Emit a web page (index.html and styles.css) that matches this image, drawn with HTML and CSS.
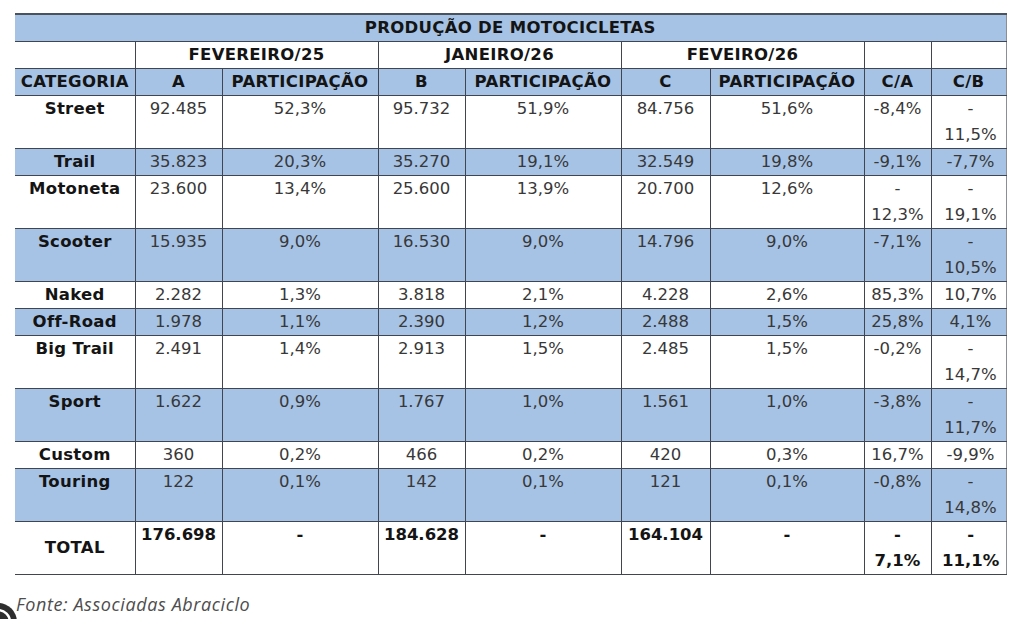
FILE: index.html
```html
<!DOCTYPE html>
<html lang="pt-BR">
<head>
<meta charset="utf-8">
<title>Produção de Motocicletas</title>
<link rel="stylesheet" href="styles.css">
</head>
<body>
<main class="page">
  <table class="prod">
    <colgroup>
      <col class="c-cat"><col class="c-num"><col class="c-part"><col class="c-num"><col class="c-part"><col class="c-num2"><col class="c-part2"><col class="c-ca"><col class="c-cb">
    </colgroup>
    <tr class="blue title"><th colspan="9">PRODUÇÃO DE MOTOCICLETAS</th></tr>
    <tr class="months">
      <th class="blank"></th>
      <th colspan="2">FEVEREIRO/25</th>
      <th colspan="2">JANEIRO/26</th>
      <th colspan="2">FEVEIRO/26</th>
      <th></th>
      <th></th>
    </tr>
    <tr class="blue head">
      <th>CATEGORIA</th><th>A</th><th>PARTICIPAÇÃO</th><th>B</th><th>PARTICIPAÇÃO</th><th>C</th><th>PARTICIPAÇÃO</th><th>C/A</th><th>C/B</th>
    </tr>
    <tr>
      <th class="cat">Street</th><td>92.485</td><td>52,3%</td><td>95.732</td><td>51,9%</td><td>84.756</td><td>51,6%</td><td>-8,4%</td><td class="cb">-<br>11,5%</td>
    </tr>
    <tr class="blue">
      <th class="cat">Trail</th><td>35.823</td><td>20,3%</td><td>35.270</td><td>19,1%</td><td>32.549</td><td>19,8%</td><td>-9,1%</td><td class="cb">-7,7%</td>
    </tr>
    <tr>
      <th class="cat">Motoneta</th><td>23.600</td><td>13,4%</td><td>25.600</td><td>13,9%</td><td>20.700</td><td>12,6%</td><td>-<br>12,3%</td><td class="cb">-<br>19,1%</td>
    </tr>
    <tr class="blue">
      <th class="cat">Scooter</th><td>15.935</td><td>9,0%</td><td>16.530</td><td>9,0%</td><td>14.796</td><td>9,0%</td><td>-7,1%</td><td class="cb">-<br>10,5%</td>
    </tr>
    <tr>
      <th class="cat">Naked</th><td>2.282</td><td>1,3%</td><td>3.818</td><td>2,1%</td><td>4.228</td><td>2,6%</td><td>85,3%</td><td class="cb">10,7%</td>
    </tr>
    <tr class="blue">
      <th class="cat">Off-Road</th><td>1.978</td><td>1,1%</td><td>2.390</td><td>1,2%</td><td>2.488</td><td>1,5%</td><td>25,8%</td><td class="cb">4,1%</td>
    </tr>
    <tr>
      <th class="cat">Big Trail</th><td>2.491</td><td>1,4%</td><td>2.913</td><td>1,5%</td><td>2.485</td><td>1,5%</td><td>-0,2%</td><td class="cb">-<br>14,7%</td>
    </tr>
    <tr class="blue">
      <th class="cat">Sport</th><td>1.622</td><td>0,9%</td><td>1.767</td><td>1,0%</td><td>1.561</td><td>1,0%</td><td>-3,8%</td><td class="cb">-<br>11,7%</td>
    </tr>
    <tr>
      <th class="cat">Custom</th><td>360</td><td>0,2%</td><td>466</td><td>0,2%</td><td>420</td><td>0,3%</td><td>16,7%</td><td class="cb">-9,9%</td>
    </tr>
    <tr class="blue">
      <th class="cat">Touring</th><td>122</td><td>0,1%</td><td>142</td><td>0,1%</td><td>121</td><td>0,1%</td><td>-0,8%</td><td class="cb">-<br>14,8%</td>
    </tr>
    <tr class="total">
      <th class="cat mid">TOTAL</th><td>176.698</td><td>-</td><td>184.628</td><td>-</td><td>164.104</td><td>-</td><td>-<br>7,1%</td><td class="cb">-<br>11,1%</td>
    </tr>
  </table>
  <p class="fonte">Fonte: Associadas Abraciclo</p>
</main>
<div class="fab" aria-hidden="true">
  <svg width="40" height="40" viewBox="0 0 40 40">
    <circle cx="20" cy="20" r="19" fill="#2e2e2e"/>
    <circle cx="20" cy="20" r="12" fill="none" stroke="#ffffff" stroke-width="2.5"/>
  </svg>
</div>
</body>
</html>
```

FILE: styles.css
```css
html, body {
  margin: 0;
  padding: 0;
  background: #ffffff;
}

.page {
  padding: 13px 0 0 15px;
}

.prod {
  border-collapse: collapse;
  table-layout: fixed;
  width: 991px;
  font-family: "DejaVu Sans", Verdana, sans-serif;
  font-size: 16.5px;
  line-height: 26px;
  color: #383838;
}

.c-cat { width: 120px; }
.c-num { width: 87px; }
.c-part { width: 156px; }
.c-num2 { width: 89px; }
.c-part2 { width: 154px; }
.c-ca { width: 67px; }
.c-cb { width: 75px; }

.prod th,
.prod td {
  border: 1px solid #3f4652;
  padding: 0;
  text-align: center;
  vertical-align: top;
  white-space: nowrap;
  overflow: hidden;
}

.prod tr > :first-child {
  border-left: none;
}

.prod tr > :last-child {
  border-right: 1px solid #8a8f96;
}

.prod th {
  font-weight: bold;
  color: #141414;
  letter-spacing: 0.3px;
}

.prod td {
  font-weight: normal;
}

.prod .blue th,
.prod .blue td {
  background: #a6c3e5;
}

.prod .title th {
  border-top: 2px solid #4a525e;
}

.prod .cb {
  padding-left: 4px;
}

.prod .total td {
  font-weight: bold;
  color: #141414;
}

.prod .mid {
  vertical-align: middle;
}

.fonte {
  margin: 17px 0 0 1px;
  font-family: "Open Sans", "Liberation Sans", sans-serif;
  font-style: italic;
  font-size: 18px;
  letter-spacing: 0.6px;
  color: #4d4d4d;
}

.fab {
  position: absolute;
  left: -22px;
  top: 602px;
  width: 40px;
  height: 40px;
}
```
